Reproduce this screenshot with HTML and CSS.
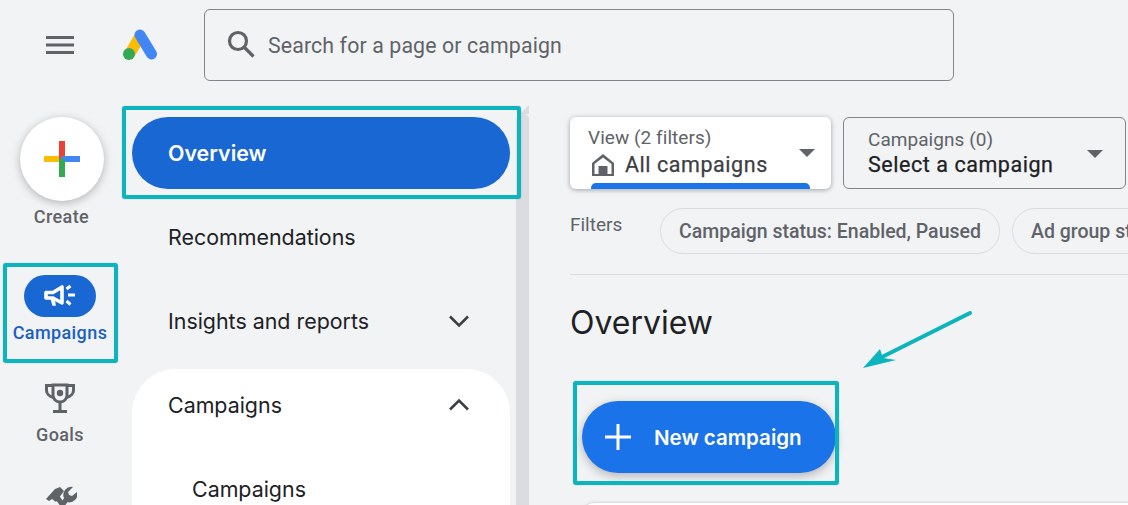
FILE: index.html
```html
<!DOCTYPE html>
<html lang="en">
<head>
<meta charset="utf-8">
<title>Google Ads overview</title>
<link rel="stylesheet" href="styles.css">
</head>
<body>
<div class="page">
  <header class="topbar">
    <svg class="menu-icon" viewBox="0 0 28 18"><path d="M0 1.500h28M0 9h28M0 16.500h28" stroke="#5f6368" stroke-width="3"/></svg>
    <svg class="logo" viewBox="0 0 34 31">
      <path d="M13 3 1 24l10 4L23 9z" fill="#fbbc04"/>
      <path d="M17 6 28.500 25" stroke="#4285f4" stroke-width="11" stroke-linecap="round" fill="none"/>
      <circle cx="6" cy="25" r="6" fill="#34a853"/>
    </svg>
    <div class="search">
      <svg class="search-icon" viewBox="0 0 28 28"><circle cx="11" cy="11" r="8.500" fill="none" stroke="#5f6368" stroke-width="3.200"/><path d="m17 17 9.500 9.500" stroke="#5f6368" stroke-width="3.200"/></svg>
      <span>Search for a page or campaign</span>
    </div>
  </header>

  <div class="workspace">
    <aside class="rail">
      <div class="create-circle">
        <svg viewBox="0 0 36 36" class="create-plus">
          <path d="M0 15h18v6H0z" fill="#fbbc04"/>
          <path d="M15 0h6v18l-6 3z" fill="#ea4335"/>
          <path d="M18 15h18v6H15z" fill="#4285f4"/>
          <path d="M15 18h6v18h-6z" fill="#34a853"/>
        </svg>
      </div>
      <div class="rail-label create-label">Create</div>
      <div class="rail-pill">
        <svg viewBox="0 0 32 24" class="megaphone">
          <path d="M2 8.500h7l9-5.500v16l-9-5H2z" fill="none" stroke="#fff" stroke-width="3.600" stroke-linejoin="round"/>
          <path d="M7 14l2 7h2l-1-7z" fill="#fff" stroke="#fff" stroke-width="1.500"/>
          <path d="M22.500 5l4-3M24 11h7M22.500 17l4 3.500" stroke="#fff" stroke-width="3" fill="none"/>
        </svg>
      </div>
      <div class="rail-label rail-active">Campaigns</div>
      <svg viewBox="0 0 30 30" class="trophy">
        <path d="M8 2h14v10c0 4-3 7-7 7s-7-3-7-7z" fill="none" stroke="#5f6368" stroke-width="3"/>
        <path d="M8 2.500H1.500v5c0 3 3 6 7 7M22 2.500h6.500v5c0 3-3 6-7 7M15 19v9M8 28.500h14" fill="none" stroke="#5f6368" stroke-width="3"/>
        <circle cx="15" cy="10" r="3.200" fill="#5f6368"/>
      </svg>
      <div class="rail-label goals-label">Goals</div>
      <svg viewBox="0 0 32 32" class="tools">
        <path d="M9 31 23 11M26 31 12 11" stroke="#5f6368" stroke-width="5" fill="none"/>
        <path d="M1 13 10 3l5-2 4 4-8 11-4-3-3 2z" fill="#5f6368"/>
        <path d="M19 12a8 8 0 0 1 9-11l-5 5 1 3 3 1 5-4a8 8 0 0 1-10 10z" fill="#5f6368"/>
      </svg>
    </aside>

    <nav class="sidenav">
      <div class="nav-item nav-selected">Overview</div>
      <div class="nav-item">Recommendations</div>
      <div class="nav-item">Insights and reports
        <svg class="chevron" viewBox="0 0 22 14"><path d="m2 2.500 9 9 9-9" fill="none" stroke="#3c4043" stroke-width="2.600"/></svg>
      </div>
      <div class="nav-card">
        <div class="nav-item">Campaigns
          <svg class="chevron" viewBox="0 0 22 14"><path d="m2 11.500 9-9 9 9" fill="none" stroke="#3c4043" stroke-width="2.600"/></svg>
        </div>
        <div class="nav-item nav-sub">Campaigns</div>
      </div>
    </nav>

    <div class="scrolltrack">
      <div class="scroll-cap"></div>
      <div class="scroll-thumb"></div>
    </div>

    <main class="content">
      <div class="pickers">
        <div class="picker picker-view">
          <div class="picker-label">View (2 filters)</div>
          <div class="picker-value">
            <svg viewBox="0 0 24 24" class="home"><path d="M12 1 1 10v13h22V10zm0 3.500L20.500 11v10h-4v-8h-9v8h-4V11z" fill="#5f6368" fill-rule="evenodd"/></svg>
            All campaigns
          </div>
          <div class="view-tab"></div>
          <div class="caret"></div>
        </div>
        <div class="picker picker-campaign">
          <div class="picker-label">Campaigns (0)</div>
          <div class="picker-value">Select a campaign</div>
          <div class="caret"></div>
        </div>
      </div>
      <div class="filters">
        <span class="filters-label">Filters</span>
        <span class="chip">Campaign status: Enabled, Paused</span>
        <span class="chip">Ad group status: Enabled, Paused</span>
      </div>
      <h1 class="title">Overview</h1>
      <button class="new-campaign">
        <svg viewBox="0 0 26 26" class="plus"><path d="M13 0v26M0 13h26" stroke="#fff" stroke-width="3"/></svg>
        New campaign
      </button>
      <div class="lower-card"></div>
    </main>
  </div>

  <div class="mark mark-overview"></div>
  <div class="mark mark-campaigns"></div>
  <div class="mark mark-new"></div>
  <svg class="mark-arrow" viewBox="0 0 112 60">
    <path d="M108 3 16 49" stroke="#0cb4bd" stroke-width="4" stroke-linecap="round"/>
    <path d="M1 58 18 39l3 9 13 2z" fill="#0cb4bd"/>
  </svg>
</div>
</body>
</html>
```
FILE: styles.css
```css
* { box-sizing: border-box; }
html, body { margin: 0; height: 100%; overflow: hidden; }
body { background: #f1f3f5; color: #202124; font-family: Roboto, "Liberation Sans", sans-serif; }
.page { position: relative; width: 1128px; height: 505px; overflow: hidden; }

.topbar { display: flex; align-items: center; height: 90px; padding: 0 0 0 46px; }
.menu-icon { width: 28px; height: 18px; }
.logo { width: 34px; height: 31px; margin: -1px 0 0 49px; }
.search { display: flex; align-items: center; width: 750px; height: 72px; margin-left: 47px; padding-left: 22px; border: 1px solid #80868b; border-radius: 6px; color: #5f6368; font-size: 21.300px; letter-spacing: .13px; }
.search-icon { width: 28px; height: 28px; margin: -3px 13px 0 0; }

.workspace { display: flex; padding-top: 27px; }

.rail { display: flex; flex-direction: column; align-items: center; width: 122px; flex: none; }
.create-circle { display: flex; align-items: center; justify-content: center; width: 84px; height: 84px; margin-left: 2px; border-radius: 50%; background: #fff; box-shadow: 0 2px 8px rgba(60, 64, 67, .35); }
.create-plus { width: 36px; height: 36px; }
.rail-label { font-size: 18px; font-weight: 500; line-height: 20px; color: #5f6368; letter-spacing: .4px; }
.create-label { margin: 6px 0 0 1px; }
.rail-pill { display: flex; align-items: center; justify-content: center; width: 72px; height: 42px; margin: 48px 2px 0 0; border-radius: 21px; background: #1967d2; }
.megaphone { width: 32px; height: 24px; }
.rail-active { margin: 6px 2px 0 0; color: #1a5fc4; }
.trophy { width: 30px; height: 30px; margin: 40px 2px 0 0; }
.goals-label { margin: 12px 2px 0 0; }
.tools { width: 32px; height: 32px; margin-top: 41px; }

.sidenav { width: 378px; margin-left: 10px; flex: none; }
.nav-item { display: flex; align-items: center; justify-content: space-between; height: 72px; margin-bottom: 12px; padding: 0 40px 0 36px; font-family: Inter, sans-serif; font-size: 21.400px; color: #202124; }
.nav-selected { border-radius: 36px; background: #1967d2; color: #fff; font-weight: 600; }
.chevron { width: 22px; height: 14px; }
.nav-card { height: 300px; border-radius: 44px; background: #fff; }
.nav-sub { padding-left: 60px; }

.scrolltrack { display: flex; flex-direction: column; width: 13px; margin: -12px 0 0 6px; flex: none; }
.scroll-cap { height: 0; border-top: 9px solid transparent; border-right: 9px solid #dadce0; margin-left: 4px; }
.scroll-thumb { height: 400px; background: #dadce0; border-radius: 5px 5px 0 0; }

.content { flex: none; width: 558px; margin-left: 41px; }
.pickers { display: flex; gap: 12px; height: 72px; }
.picker { position: relative; height: 72px; border-radius: 6px; overflow: hidden; font-size: 19px; }
.picker-view { width: 261px; padding: 10px 0 0 18px; background: #fff; box-shadow: 0 1px 5px rgba(60, 64, 67, .45); }
.picker-campaign { width: 283px; padding: 11px 0 0 24px; border: 1px solid #80868b; }
.picker-label { color: #5f6368; line-height: 22px; letter-spacing: .05px; }
.picker-value { display: flex; align-items: center; margin-top: 3px; font-size: 21.500px; font-weight: 400; line-height: 26px; letter-spacing: .55px; color: #3c4043; -webkit-text-stroke: .25px currentColor; }
.picker-campaign .picker-value { margin-top: 1px; color: #202124; }
.home { width: 24px; height: 24px; margin: 0 10px 0 3px; }
.view-tab { position: absolute; left: 21px; bottom: 0; width: 219px; height: 6px; border-radius: 5px 5px 0 0; background: #1a73e8; }
.caret { position: absolute; right: 16px; top: 32px; width: 0; height: 0; border-left: 8px solid transparent; border-right: 8px solid transparent; border-top: 8px solid #5f6368; }
.picker-campaign .caret { right: 22px; }

.filters { display: flex; align-items: center; gap: 12px; width: 640px; height: 67px; margin-top: 19px; padding-bottom: 21px; white-space: nowrap; border-bottom: 1px solid #dadce0; }
.filters-label { flex: none; width: 78px; margin-top: -12px; color: #5f6368; font-size: 19px; }
.chip { flex: none; display: flex; align-items: center; height: 46px; padding: 1px 18px 0; border: 1px solid #dadce0; border-radius: 23px; color: #5f6368; font-size: 19.500px; font-weight: 500; }

.title { margin: 27px 0 0; font-family: Inter, sans-serif; font-size: 32px; font-weight: 400; line-height: 42px; color: #202124; }

.new-campaign { display: flex; align-items: center; width: 254px; height: 72px; margin: 57px 0 0 12px; padding: 0 0 0 23px; border: 0; border-radius: 36px; background: #1a73e8; color: #fff; font-family: Inter, sans-serif; font-size: 20.500px; font-weight: 600; box-shadow: 0 3px 10px rgba(60, 64, 67, .35); }
.plus { width: 26px; height: 26px; margin-right: 23px; }

.lower-card { width: 558px; height: 60px; margin: 30px 0 0 12px; border-radius: 12px 0 0 0; background: #fff; box-shadow: 0 0 3px rgba(60, 64, 67, .3); }

.mark { position: absolute; border: 4px solid #0cb4bd; border-radius: 3px; box-shadow: 0 0 1px rgba(0, 0, 0, .5); }
.mark-overview { left: 122px; top: 106px; width: 399px; height: 93px; }
.mark-campaigns { left: 3px; top: 263px; width: 115px; height: 100px; }
.mark-new { left: 573px; top: 381px; width: 266px; height: 104px; }
.mark-arrow { position: absolute; left: 862px; top: 310px; width: 112px; height: 60px; }
```
